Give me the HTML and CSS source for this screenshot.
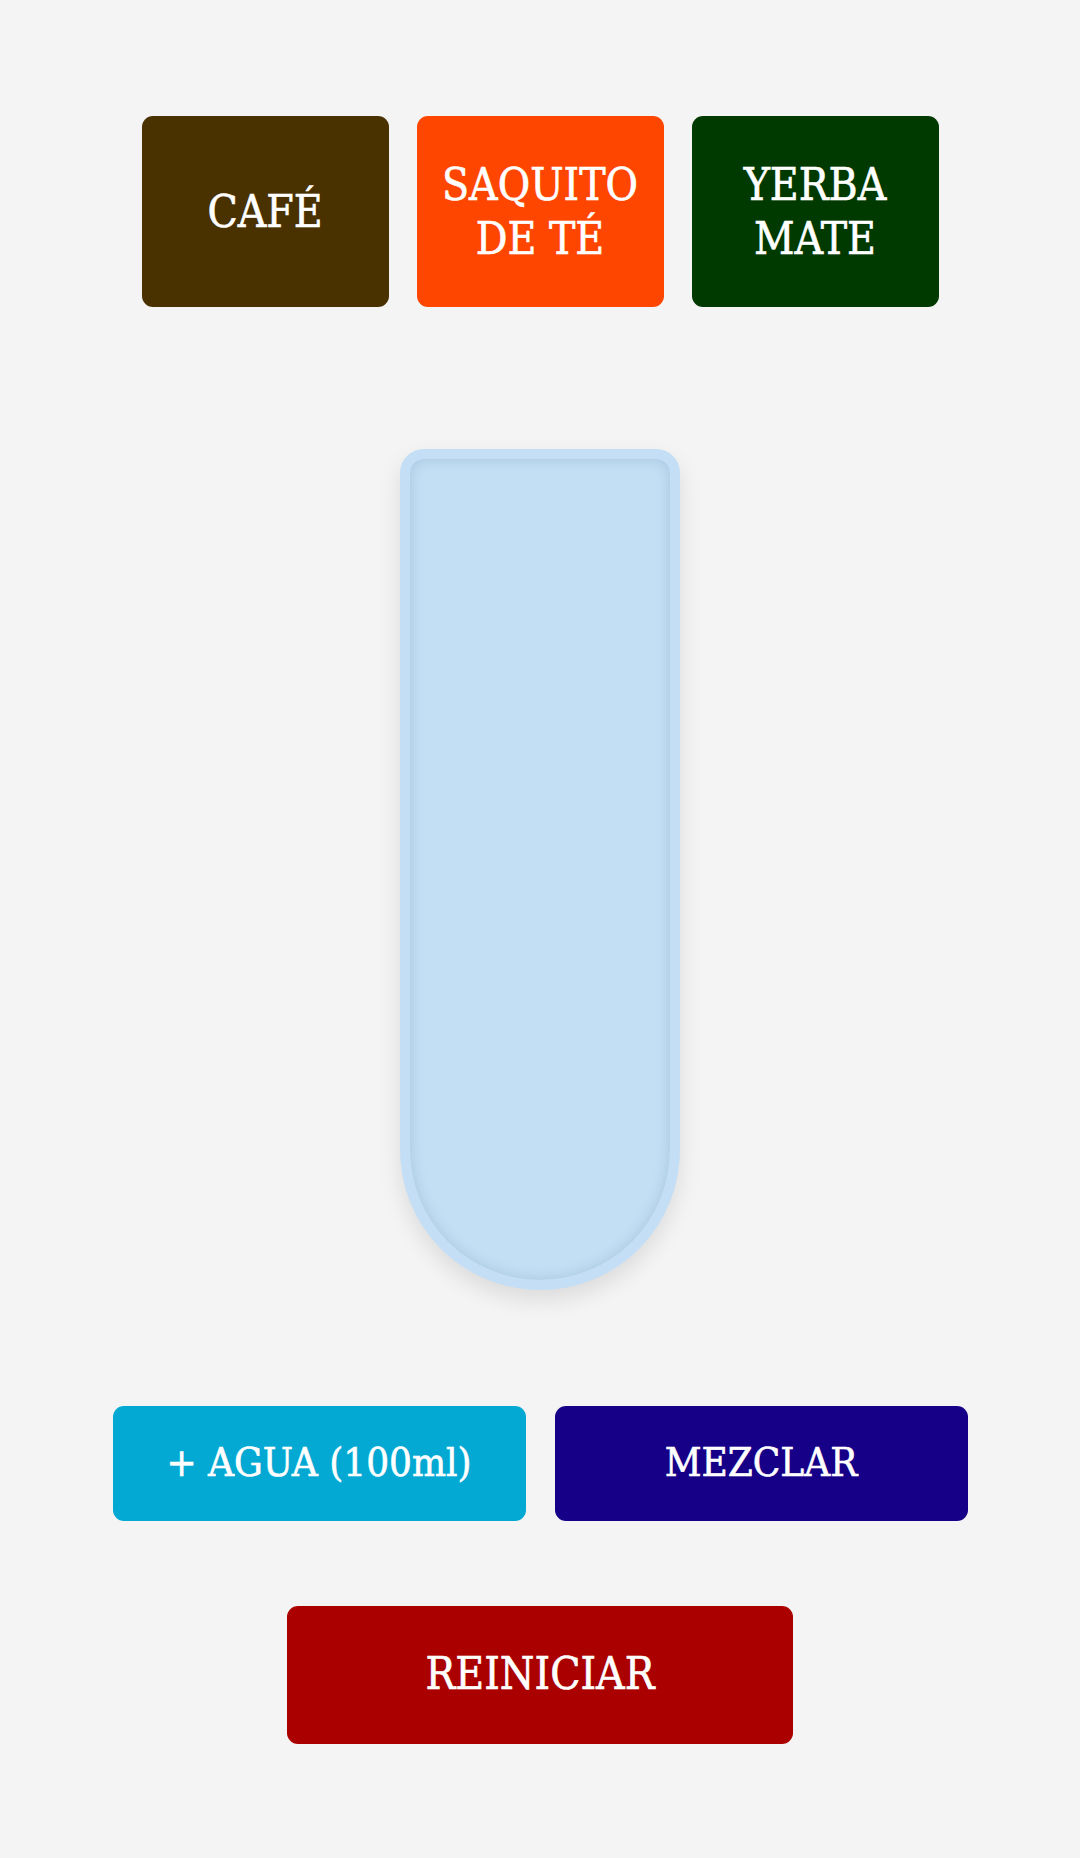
FILE: index.html
```html
<!DOCTYPE html>
<html lang="es">
<head>
<meta charset="utf-8">
<title>Preparar infusión</title>
<link rel="stylesheet" href="styles.css">
</head>
<body>
<main class="app">
  <div class="ingredients">
    <button class="btn ing cafe">CAFÉ</button>
    <button class="btn ing te">SAQUITO<br>DE TÉ</button>
    <button class="btn ing yerba">YERBA<br>MATE</button>
  </div>
  <div class="tube"></div>
  <div class="actions">
    <button class="btn act agua">+ AGUA (100ml)</button>
    <button class="btn act mezclar">MEZCLAR</button>
  </div>
  <button class="btn reset">REINICIAR</button>
</main>
</body>
</html>
```

FILE: styles.css
```css
html, body {
  margin: 0;
  padding: 0;
  background: #f4f4f4;
}
.app {
  display: flex;
  flex-direction: column;
  align-items: center;
  padding-top: 116px;
  font-family: "DejaVu Serif Condensed", "DejaVu Serif", serif;
}
.btn {
  border: none;
  color: #ffffff;
  font-family: inherit;
  font-weight: normal;
  -webkit-text-stroke: 0.6px #ffffff;
  border-radius: 11px;
  padding: 0;
  display: flex;
  align-items: center;
  justify-content: center;
  text-align: center;
}
.ingredients {
  display: flex;
  gap: 28px;
}
.ing {
  width: 247px;
  height: 191px;
  font-size: 44px;
  line-height: 54px;
}
.cafe { background: #4a3100; }
.te { background: #ff4600; }
.yerba { background: #013a00; }
.tube {
  margin-top: 142px;
  width: 260px;
  height: 821px;
  border: 10px solid #c4dff5;
  background: #c3dff4;
  border-radius: 24px 24px 140px 140px;
  box-shadow: 0 10px 22px rgba(0, 0, 0, 0.10), inset 0 0 14px rgba(40, 80, 120, 0.18);
}
.actions {
  margin-top: 116px;
  display: flex;
  gap: 29px;
}
.act {
  width: 413px;
  height: 115px;
  font-size: 40px;
  padding-bottom: 3px;
}
.agua { background: #03a9d3; }
.mezclar { background: #160088; }
.reset {
  margin-top: 85px;
  width: 506px;
  height: 138px;
  font-size: 44px;
  padding-bottom: 4px;
  background: #aa0000;
}
```
